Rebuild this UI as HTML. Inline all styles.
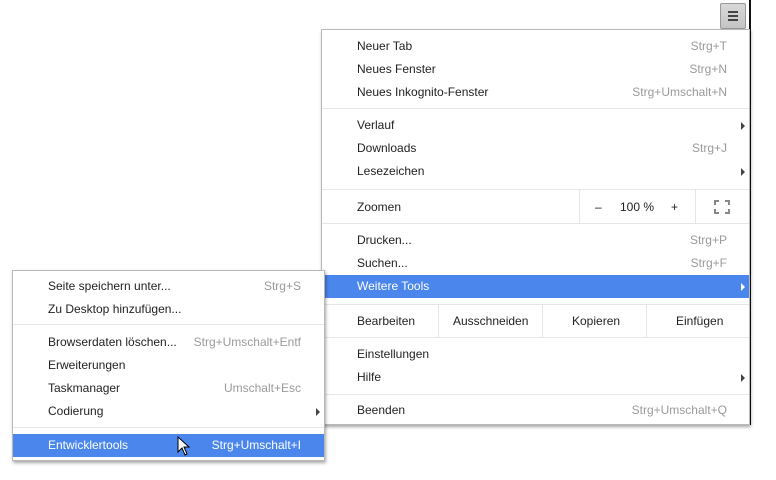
<!DOCTYPE html><html><head><style>
body{margin:0;width:776px;height:480px;background:#fff;position:relative;overflow:hidden;font-family:"Liberation Sans",sans-serif;font-size:12px;color:#222}
.m{position:absolute;background:#fff;border:1px solid #b9b9b9;box-shadow:1px 2px 3px rgba(0,0,0,.35)}
.r{position:absolute;left:0;right:0;height:23px;line-height:23px}
.r .t{position:absolute}
.r .s{position:absolute;color:#9a9a9a}
.sep{position:absolute;left:0;right:0;height:1px;background:#e6e6e6}
.hl{background:#4a86ec;color:#fff}
.hl .s{color:#fff}
.ar{position:absolute;width:0;height:0;border-left:4px solid #444;border-top:4px solid transparent;border-bottom:4px solid transparent;top:8px}
.hl .ar{border-left-color:#fff}
.vd{position:absolute;width:1px;background:#e6e6e6}
</style></head><body>
<div style="position:absolute;left:749px;top:0;width:2px;height:425px;background:#111"></div>
<div style="position:absolute;left:720px;top:3px;width:24px;height:24px;border:1px solid #999;border-radius:2px;background:linear-gradient(#d8d8d8,#c4c4c4)">
<div style="position:absolute;left:7px;top:7px;width:10px;height:2px;background:#444"></div>
<div style="position:absolute;left:7px;top:11px;width:10px;height:2px;background:#444"></div>
<div style="position:absolute;left:7px;top:15px;width:10px;height:2px;background:#444"></div></div>

<div class="m" style="left:321px;top:29px;width:427px;height:394px">
<div class="r" style="top:5px"><span class="t" style="left:35px">Neuer Tab</span><span class="s" style="right:22px">Strg+T</span></div>
<div class="r" style="top:28px"><span class="t" style="left:35px">Neues Fenster</span><span class="s" style="right:22px">Strg+N</span></div>
<div class="r" style="top:51px"><span class="t" style="left:35px">Neues Inkognito-Fenster</span><span class="s" style="right:22px">Strg+Umschalt+N</span></div>
<div class="sep" style="top:78px"></div>
<div class="r" style="top:84px"><span class="t" style="left:35px">Verlauf</span><span class="ar" style="right:4px"></span></div>
<div class="r" style="top:107px"><span class="t" style="left:35px">Downloads</span><span class="s" style="right:22px">Strg+J</span></div>
<div class="r" style="top:130px"><span class="t" style="left:35px">Lesezeichen</span><span class="ar" style="right:4px"></span></div>
<div class="sep" style="top:159px"></div>
<div class="r" style="top:166px"><span class="t" style="left:35px">Zoomen</span><span class="t" style="left:273px">–</span><span class="t" style="left:298px">100 %</span><span class="t" style="left:349px">+</span></div>
<div class="vd" style="left:257px;top:159px;height:34px"></div>
<div class="vd" style="left:373px;top:159px;height:34px"></div>
<svg style="position:absolute;left:392px;top:170px" width="16" height="14" viewBox="0 0 16 14"><path d="M1 5V1H5M11 1H15V5M15 9V13H11M5 13H1V9" fill="none" stroke="#888" stroke-width="2"/></svg>
<div class="sep" style="top:193px"></div>
<div class="r" style="top:199px"><span class="t" style="left:35px">Drucken...</span><span class="s" style="right:22px">Strg+P</span></div>
<div class="r" style="top:222px"><span class="t" style="left:35px">Suchen...</span><span class="s" style="right:22px">Strg+F</span></div>
<div class="r hl" style="top:245px"><span class="t" style="left:35px">Weitere Tools</span><span class="ar" style="right:4px"></span></div>
<div class="sep" style="top:274px"></div>
<div class="r" style="top:280px"><span class="t" style="left:35px">Bearbeiten</span><span class="t" style="left:131px">Ausschneiden</span><span class="t" style="left:250px">Kopieren</span><span class="t" style="left:354px">Einfügen</span></div>
<div class="vd" style="left:116px;top:274px;height:33px"></div>
<div class="vd" style="left:220px;top:274px;height:33px"></div>
<div class="vd" style="left:324px;top:274px;height:33px"></div>
<div class="sep" style="top:307px"></div>
<div class="r" style="top:313px"><span class="t" style="left:35px">Einstellungen</span></div>
<div class="r" style="top:336px"><span class="t" style="left:35px">Hilfe</span><span class="ar" style="right:4px"></span></div>
<div class="sep" style="top:364px"></div>
<div class="r" style="top:369px"><span class="t" style="left:35px">Beenden</span><span class="s" style="right:22px">Strg+Umschalt+Q</span></div>
</div>

<div class="m" style="left:12px;top:270px;width:311px;height:189px">
<div class="r" style="top:4px"><span class="t" style="left:35px">Seite speichern unter...</span><span class="s" style="right:23px">Strg+S</span></div>
<div class="r" style="top:27px"><span class="t" style="left:35px">Zu Desktop hinzufügen...</span></div>
<div class="sep" style="top:53px"></div>
<div class="r" style="top:60px"><span class="t" style="left:35px">Browserdaten löschen...</span><span class="s" style="right:23px">Strg+Umschalt+Entf</span></div>
<div class="r" style="top:83px"><span class="t" style="left:35px">Erweiterungen</span></div>
<div class="r" style="top:106px"><span class="t" style="left:35px">Taskmanager</span><span class="s" style="right:23px">Umschalt+Esc</span></div>
<div class="r" style="top:129px"><span class="t" style="left:35px">Codierung</span><span class="ar" style="right:4px"></span></div>
<div class="sep" style="top:156px"></div>
<div class="r hl" style="top:163px"><span class="t" style="left:35px">Entwicklertools</span><span class="s" style="right:23px">Strg+Umschalt+I</span></div>
</div>
<svg style="position:absolute;left:177px;top:436px" width="14" height="20" viewBox="0 0 14 20"><path d="M1 1 L1 16 L5 12 L8 19 L10 18 L7 11 L12 11 Z" fill="#fff" stroke="#000" stroke-width="1"/></svg>
</body></html>
